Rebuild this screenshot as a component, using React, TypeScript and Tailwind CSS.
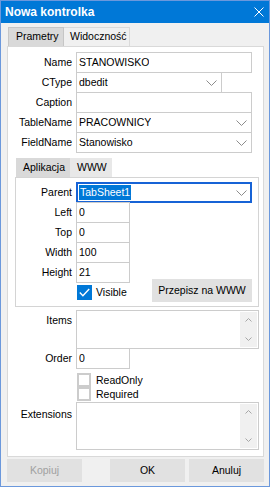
const Chevron = () => (
  <svg width="11" height="6" viewBox="0 0 11 6" className="shrink-0">
    <path d="M0.5 0.5 L5.5 5.5 L10.5 0.5" fill="none" stroke="#8c8c8c" strokeWidth="1" />
  </svg>
);

const ScrollArrows = () => (
  <div className="ml-auto flex h-full w-[17px] flex-col items-center justify-between bg-[#f0f0f0] py-[6px]">
    <svg width="7" height="4" viewBox="0 0 7 4">
      <path d="M0.5 3.5 L3.5 0.5 L6.5 3.5" fill="none" stroke="#a6a6a6" strokeWidth="1" />
    </svg>
    <svg width="7" height="4" viewBox="0 0 7 4">
      <path d="M0.5 0.5 L3.5 3.5 L6.5 0.5" fill="none" stroke="#a6a6a6" strokeWidth="1" />
    </svg>
  </div>
);

const Field = ({
  label,
  labelW,
  w,
  value,
  combo,
}: {
  label: string;
  labelW: string;
  w: string;
  value?: string;
  combo?: boolean;
}) => (
  <div className="flex h-[20px]">
    <div className={`${labelW} shrink-0 text-right leading-[21px]`}>{label}</div>
    <div
      className={`ml-[4px] flex h-[21px] ${w} shrink-0 items-center border border-[#cccccc] bg-white pl-[2px] pr-[4px]`}
    >
      <span className="truncate">{value}</span>
      {combo && (
        <span className="ml-auto">
          <Chevron />
        </span>
      )}
    </div>
  </div>
);

const CheckRow = ({ label }: { label: string }) => (
  <div className="flex h-[14px] items-center">
    <div className="ml-[69px] h-[14px] w-[14px] shrink-0 border-2 border-[#cccccc] bg-white" />
    <span className="ml-[5px] leading-[14px]">{label}</span>
  </div>
);

export default function App() {
  return (
    <div className="flex h-[487px] w-[270px] flex-col border border-[#6b98dc] bg-[#f0f0f0] font-['Liberation_Sans',Arial,sans-serif] text-[10.5px] text-black">
      {/* title bar */}
      <div className="flex h-[22px] shrink-0 items-center bg-[#0078d7] pl-[4px] pr-[5px]">
        <span className="text-[12px] font-bold text-white">Nowa kontrolka</span>
        <svg width="10" height="10" viewBox="0 0 10 10" className="ml-auto">
          <path d="M0.5 0.5 L9.5 9.5 M9.5 0.5 L0.5 9.5" stroke="#ffffff" strokeWidth="1" />
        </svg>
      </div>

      {/* main tabs */}
      <div className="mt-[4px] flex h-[19px] pl-[7px]">
        <div className="flex w-[56px] items-center border-x border-t border-[#c6c6c6] bg-[#d9d9d9] pl-[7px]">
          Prametry
        </div>
        <div className="flex w-[66px] items-center border-r border-t border-[#dadada] bg-[#f0f0f0] pl-[6px]">
          Widoczność
        </div>
      </div>

      {/* page */}
      <div className="ml-[6px] flex h-[411px] w-[257px] flex-col border border-[#d9d9d9] bg-white pt-[5px]">
        <Field label="Name" labelW="w-[64px]" w="w-[176px]" value="STANOWISKO" />
        <Field label="CType" labelW="w-[64px]" w="w-[146px]" value="dbedit" combo />
        <Field label="Caption" labelW="w-[64px]" w="w-[176px]" />
        <Field label="TableName" labelW="w-[64px]" w="w-[176px]" value="PRACOWNICY" combo />
        <Field label="FieldName" labelW="w-[64px]" w="w-[176px]" value="Stanowisko" combo />

        {/* sub tabs */}
        <div className="ml-[8px] mt-[6px] flex h-[19px]">
          <div className="flex w-[54px] items-center bg-[#d9d9d9] pl-[7px]">Aplikacja</div>
          <div className="flex w-[42px] items-center bg-[#e8e8e8] pl-[7px]">WWW</div>
        </div>

        <div className="ml-[7px] flex w-[244px] flex-col border border-[#d4d4d4] bg-white pb-[4px] pt-[4px]">
          <div className="flex h-[20px]">
            <div className="w-[56px] shrink-0 text-right leading-[21px]">Parent</div>
            <div className="ml-[4px] flex h-[21px] w-[176px] items-center border-2 border-[#1763d6] bg-white pl-[1px] pr-[3px]">
              <span className="bg-[#0078d7] px-[1px] leading-[15px] text-white">TabSheet1</span>
              <span className="ml-auto">
                <Chevron />
              </span>
            </div>
          </div>
          <div className="flex">
            <div className="flex flex-col">
              <Field label="Left" labelW="w-[56px]" w="w-[54px]" value="0" />
              <Field label="Top" labelW="w-[56px]" w="w-[54px]" value="0" />
              <Field label="Width" labelW="w-[56px]" w="w-[54px]" value="100" />
              <Field label="Height" labelW="w-[56px]" w="w-[54px]" value="21" />
              <div className="mt-[3px] flex h-[17px] items-start">
                <div className="ml-[61px] flex h-[15px] w-[15px] items-center justify-center bg-[#0078d7]">
                  <svg width="11" height="9" viewBox="0 0 11 9">
                    <path d="M0.8 4.6 L3.9 7.7 L10.2 1" fill="none" stroke="#ffffff" strokeWidth="1.4" />
                  </svg>
                </div>
                <span className="ml-[4px] leading-[15px]">Visible</span>
              </div>
            </div>
            <div className="mb-0 ml-auto mr-[6px] flex h-[23px] w-[100px] items-center justify-center self-end bg-[#e1e1e1]">
              Przepisz na WWW
            </div>
          </div>
        </div>

        {/* items */}
        <div className="mt-[3px] flex">
          <div className="w-[64px] shrink-0 text-right leading-[20px]">Items</div>
          <div className="ml-[4px] flex h-[39px] w-[183px] border border-[#cccccc] bg-white p-px">
            <ScrollArrows />
          </div>
        </div>
        <div className="-mt-px">
          <Field label="Order" labelW="w-[64px]" w="w-[54px]" value="0" />
        </div>
        <div className="mt-[5px]">
          <CheckRow label="ReadOnly" />
          <CheckRow label="Required" />
        </div>
        <div className="mt-[1px] flex">
          <div className="w-[64px] shrink-0 pt-[2px] text-right leading-[20px]">Extensions</div>
          <div className="ml-[4px] flex h-[48px] w-[183px] border border-[#cccccc] bg-white p-px">
            <ScrollArrows />
          </div>
        </div>
      </div>

      {/* buttons */}
      <div className="ml-[6px] mt-[2px] flex h-[23px]">
        <div className="flex w-[75px] items-center justify-center bg-[#e1e1e1] text-[#a0a0a0]">Kopiuj</div>
        <div className="ml-[28px] flex w-[75px] items-center justify-center bg-[#e1e1e1]">OK</div>
        <div className="ml-[4px] flex w-[75px] items-center justify-center bg-[#e1e1e1]">Anuluj</div>
      </div>
    </div>
  );
}
